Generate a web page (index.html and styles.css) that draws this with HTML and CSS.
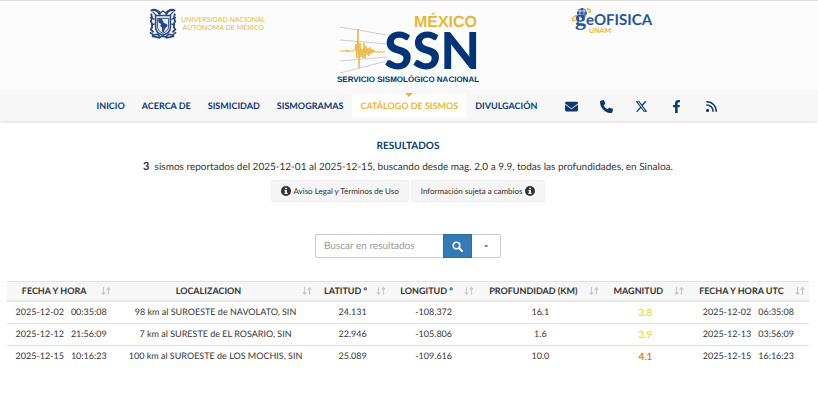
FILE: index.html
```html
<!DOCTYPE html>
<html lang="es">
<head>
  <meta charset="UTF-8">
  <meta name="viewport" content="width=device-width, initial-scale=1.0">
  <title>Servicio Sismológico Nacional | Catálogo de sismos</title>
  <link rel="stylesheet" href="styles.css">
</head>
<body>

  <!-- iconos -->
  <svg class="sprite" aria-hidden="true">
    <symbol id="sort" viewBox="0 0 10 10">
      <path d="M2.5 1v7M.8 6.3l1.7 2 1.7-2M7.5 9V2M5.8 3.7l1.7-2 1.7 2" fill="none" stroke="currentColor" stroke-width="1.2"/>
    </symbol>
    <symbol id="info" viewBox="0 0 10 10">
      <circle cx="5" cy="5" r="5" fill="currentColor"/>
      <path d="M4.2 1.8h1.7v1.4H4.2zM3.5 4.1h2.4v2.7h.7V8H3.4V6.8h.8V5.2h-.7z" fill="#fff"/>
    </symbol>
  </svg>

  <header class="header">
    <div class="logos">
      <a href="#" class="logo logo-unam">
        <svg width="28" height="32" viewBox="0 0 30 32" fill="none" stroke="#24477f" role="img" aria-label="Escudo UNAM">
          <path d="M2 2c3-2 6-1 8 1l2 3M28 2c-3-2-6-1-8 1l-2 3" stroke-width="2.4"/>
          <path d="M2 5c2 3 1 6 0 8 2 3 2 6 0 9l3 3M28 5c-2 3-1 6 0 8-2 3-2 6 0 9l-3 3" stroke-width="2"/>
          <path d="M10 2l2 2 3-2 3 2 2-2M4 3l4 4M26 3l-4 4M1 9l5 2M29 9l-5 2M2 17l4-1M28 17l-4-1" stroke-width="1.4"/>
          <path d="M7 7h16v12c0 5-4 8-8 9-4-1-8-4-8-9z" stroke-width="1.6" fill="#e9eef6"/>
          <path d="M9 10h12v9c0 3-3 6-6 7-3-1-6-4-6-7z" stroke-width="1"/>
          <path d="M10 10l4 1 1 2 1 2 3 1 1 2-3 3-1 4-2-1v-4l-2-2 1-2-3-2z" fill="#24477f" stroke="none"/>
          <path d="M1 25l4 3 4-1 3 3 3-1 3 1 3-3 4 1 4-3M3 29l5 1 4 1M27 29l-5 1-4 1" stroke-width="1.8"/>
        </svg>
        <span>UNIVERSIDAD NACIONAL<br>AUTÓNOMA DE MÉXICO</span>
      </a>
      <a href="#" class="logo">
        <svg width="140" height="76" viewBox="0 0 140 76" role="img" aria-label="SSN México">
          <path d="M1 19l47 8M1 32l47 4M1 53l47-4M1 65l47-12" stroke="#b9c3d1" stroke-width=".8" fill="none"/>
          <path d="M1 43h5l1-1 1 2 1-2 1 2 1-1h5l1-7 1 14 1-29 1 39 1-25 1 14 1-8 1 9 1-15 1 15 1-12 1 9 1-7 1 8 1-9 1 7 1-5 1 4 1-3 1 2h2l1-1 1 2 1-1h5" fill="none" stroke="#e8b63c"/>
          <text class="logo-mexico" x="138" y="19" text-anchor="end">MÉXICO</text>
          <text class="logo-ssn" x="141" y="61" text-anchor="end">SSN</text>
          <text class="logo-nombre" x="69" y="74" text-anchor="middle">SERVICIO SISMOLÓGICO NACIONAL</text>
        </svg>
      </a>
      <a href="#" class="logo">
        <svg width="76" height="28" viewBox="2 0 76 28" role="img" aria-label="Geofísica UNAM">
          <circle cx="11" cy="5" r="5" fill="#24539a"/>
          <path d="M6 3h10M6 7h10M9 0v10M13 0v10" stroke="#fcfcfc" stroke-width=".8"/>
          <path d="M2 12c-1-3 2-4 4-5M1 10l1 3 3-1M16 2c3-1 4 0 3 3M16 0l3 2-1 3" fill="none" stroke="#e8b63c" stroke-width="1.3"/>
          <text class="logo-geo" x="4" y="17"><tspan class="logo-g">g</tspan>eOFISICA</text>
          <text class="logo-sub" x="18" y="25">UNAM</text>
        </svg>
      </a>
    </div>
  </header>

  <nav class="nav">
    <a href="#">INICIO</a>
    <a href="#">ACERCA DE</a>
    <a href="#">SISMICIDAD</a>
    <a href="#">SISMOGRAMAS</a>
    <a href="#" class="active">CATÁLOGO DE SISMOS</a>
    <a href="#">DIVULGACIÓN</a>
    <div class="social">
      <a href="#" aria-label="Correo"><svg width="13" height="13" viewBox="0 0 512 512"><path d="M48 64a48 48 0 0 0-29 86l218 164c11 8 27 8 38 0l218-164a48 48 0 0 0-29-86zM0 176v208a64 64 0 0 0 64 64h384a64 64 0 0 0 64-64V176L294 339c-23 17-53 17-76 0z"/></svg></a>
      <a href="#" aria-label="Teléfono"><svg width="13" height="13" viewBox="0 0 512 512"><path d="M165 25c-8-19-28-29-48-23L29 26C12 31 0 46 0 64c0 247 201 448 448 448 18 0 33-12 38-29l24-88c5-20-5-40-24-48l-96-40c-16-7-35-2-46 12l-41 49c-70-33-127-90-160-160l49-40c14-11 19-30 12-46z"/></svg></a>
      <a href="#" aria-label="X"><svg width="13" height="13" viewBox="0 0 512 512"><path d="M389 48h71L306 224l181 240H345L234 319 107 464H36l165-188L27 48h145l100 133zm-25 374h39L151 88h-42z"/></svg></a>
      <a href="#" aria-label="Facebook"><svg width="9" height="13" viewBox="0 0 320 512"><path d="M279 288l14-93h-89v-60c0-25 12-50 52-50h41V7s-37-7-72-7c-73 0-121 44-121 125v70H23v93h81v224h100V288z"/></svg></a>
      <a href="#" aria-label="RSS"><svg width="11" height="11" viewBox="0 0 448 448"><path d="M0 32C0 14 14 0 32 0c230 0 416 186 416 416a32 32 0 0 1-64 0C384 222 226 64 32 64 14 64 0 50 0 32zm0 352a64 64 0 1 1 128 0 64 64 0 1 1-128 0zm32-256c159 0 288 129 288 288a32 32 0 0 1-64 0c0-124-100-224-224-224a32 32 0 0 1 0-64z"/></svg></a>
    </div>
  </nav>

  <main class="contenido">
    <h1>RESULTADOS</h1>
    <p class="resumen"><strong>3</strong>&nbsp; sismos reportados del 2025-12-01 al 2025-12-15, buscando desde mag. 2.0 a 9.9, todas las profundidades, en Sinaloa.</p>

    <div class="avisos">
      <button type="button"><svg width="10" height="10"><use href="#info"/></svg>Aviso Legal y Términos de Uso</button>
      <button type="button">Información sujeta a cambios<svg width="10" height="10"><use href="#info"/></svg></button>
    </div>

    <form class="buscador">
      <input type="text" placeholder="Buscar en resultados" aria-label="Buscar en resultados">
      <button type="button" class="btn-buscar" aria-label="Buscar">
        <svg width="11" height="11" viewBox="0 0 11 11" fill="none" stroke="#fff"><circle cx="4.5" cy="4.5" r="3.3" stroke-width="1.6"/><path d="M7 7l3 3" stroke-width="2" stroke-linecap="round"/></svg>
      </button>
      <button type="button" class="btn-limpiar">-</button>
    </form>

    <table class="tabla">
      <colgroup>
        <col class="c-fecha"><col class="c-lugar"><col class="c-lat"><col class="c-lon"><col class="c-prof"><col class="c-mag"><col class="c-utc">
      </colgroup>
      <thead>
        <tr>
          <th><div><span>FECHA Y HORA</span><svg><use href="#sort"/></svg></div></th>
          <th><div><span>LOCALIZACION</span><svg><use href="#sort"/></svg></div></th>
          <th><div><span>LATITUD º</span><svg><use href="#sort"/></svg></div></th>
          <th><div><span>LONGITUD º</span><svg><use href="#sort"/></svg></div></th>
          <th><div><span>PROFUNDIDAD (KM)</span><svg><use href="#sort"/></svg></div></th>
          <th><div><span>MAGNITUD</span><svg><use href="#sort"/></svg></div></th>
          <th><div><span>FECHA Y HORA UTC</span><svg><use href="#sort"/></svg></div></th>
        </tr>
      </thead>
      <tbody>
        <tr>
          <td>2025-12-02 &nbsp; 00:35:08</td>
          <td>98 km al SUROESTE de NAVOLATO, SIN</td>
          <td>24.131</td>
          <td>-108.372</td>
          <td>16.1</td>
          <td class="mag mag-3">3.8</td>
          <td>2025-12-02 &nbsp; 06:35:08</td>
        </tr>
        <tr>
          <td>2025-12-12 &nbsp; 21:56:09</td>
          <td>7 km al SURESTE de EL ROSARIO, SIN</td>
          <td>22.946</td>
          <td>-105.806</td>
          <td>1.6</td>
          <td class="mag mag-3">3.9</td>
          <td>2025-12-13 &nbsp; 03:56:09</td>
        </tr>
        <tr>
          <td>2025-12-15 &nbsp; 10:16:23</td>
          <td>100 km al SUROESTE de LOS MOCHIS, SIN</td>
          <td>25.089</td>
          <td>-109.616</td>
          <td>10.0</td>
          <td class="mag mag-4">4.1</td>
          <td>2025-12-15 &nbsp; 16:16:23</td>
        </tr>
      </tbody>
    </table>
  </main>

</body>
</html>
```
FILE: styles.css
```css
* {
  box-sizing: border-box;
}

body {
  margin: 0;
  font-family: Lato, sans-serif;
  font-size: 10px;
  color: #333;
  background: #fff;
  text-rendering: geometricPrecision;
}

a {
  color: #0b3a72;
  text-decoration: none;
}

button,
input {
  font-family: inherit;
  font-size: 10px;
  text-rendering: inherit;
}

.sprite {
  display: none;
}

/* encabezado */
.header {
  border-top: 1px solid #ddd;
  background: #fcfcfc;
  padding: 7px 0;
}

.logos {
  display: grid;
  grid-template-columns: repeat(3, 1fr);
  justify-items: center;
  align-items: start;
  width: 74%;
  margin: 0 auto;
}

.logo {
  display: flex;
}

.logo svg {
  overflow: visible;
}

.logo-unam {
  gap: 4px;
  align-items: center;
  font-size: 7px;
  line-height: 8px;
  color: #e8b63c;
  text-align: center;
  white-space: nowrap;
}

.logo-mexico {
  font: 700 16px "Liberation Sans", sans-serif;
  fill: #e8b63c;
}

.logo-ssn {
  font: 900 51px Lato, sans-serif;
  fill: #003478;
}

.logo-nombre {
  font: 700 8px "Liberation Sans", sans-serif;
  fill: #003478;
}

.logo-geo {
  font: 700 15px Lato, sans-serif;
  fill: #24539a;
}

.logo-g {
  font: 700 22px "Liberation Serif", serif;
}

.logo-sub {
  font: 700 7px Lato, sans-serif;
  fill: #e8b63c;
}

/* menu */
.nav {
  display: flex;
  justify-content: center;
  align-items: center;
  gap: 1px;
  padding: 3px 0;
  background: #f7f7f7;
  box-shadow: 0 1px 3px rgba(0,0,0,0.15);
  font-size: 9px;
  font-weight: 700;
}

.nav > a {
  padding: 0 8px;
  line-height: 24px;
}

.nav .active {
  position: relative;
  color: #e8b63c;
  background: #fff;
}

.nav .active::before {
  content: "";
  position: absolute;
  top: -1px;
  left: 50%;
  margin-left: -4px;
  border: 4px solid transparent;
  border-top-color: #e8b63c;
  border-bottom: 0;
}

.social {
  display: flex;
  margin-left: 8px;
}

.social a {
  display: flex;
  justify-content: center;
  align-items: center;
  width: 35px;
}

.social svg {
  fill: #0b3a72;
}

/* resultados */
.contenido {
  padding: 17px 9px 16px 7px;
  text-align: center;
}

h1 {
  margin: 0;
  font-size: 10px;
  line-height: 16px;
  color: #0b3a72;
}

.resumen {
  margin: 5px 0;
  line-height: 16px;
}

.resumen strong {
  font-size: 11px;
}

.avisos {
  display: flex;
  justify-content: center;
  gap: 2px;
}

.avisos button {
  display: flex;
  align-items: center;
  gap: 3px;
  height: 22px;
  padding: 0 9px;
  font-size: 8px;
  color: #333;
  background: #f5f5f5;
  border: 1px solid #eee;
  border-radius: 2px;
}

/* buscador */
.buscador {
  display: flex;
  justify-content: center;
  height: 24px;
  margin: 32px 0 23px;
}

.buscador input {
  width: 128px;
  padding: 0 8px;
  border: 1px solid #ccc;
  border-right: 0;
  border-radius: 3px 0 0 3px;
}

.buscador input::placeholder {
  color: #999;
}

.buscador button {
  display: flex;
  justify-content: center;
  align-items: center;
  width: 29px;
  padding: 0;
  border: 1px solid #ccc;
}

.buscador .btn-buscar {
  background: #337ab7;
  border-color: #2e6da4;
}

.buscador .btn-limpiar {
  background: #fff;
  border-left: 0;
  border-radius: 0 3px 3px 0;
  font-weight: 700;
}

/* tabla */
.tabla {
  width: 100%;
  table-layout: fixed;
  border-collapse: separate;
  border-spacing: 0;
  font-size: 9px;
  line-height: 11px;
}

.c-fecha { width: 13.5%; }
.c-lugar { width: 25%; }
.c-lat { width: 9.2%; }
.c-lon { width: 11%; }
.c-prof { width: 15.6%; }
.c-mag { width: 10.6%; }
.c-utc { width: 15.1%; }

.tabla th {
  padding: 3px 4px 4px 0;
  background: #f7f7f7;
  border-top: 1px solid #e2e2e2;
  border-bottom: 2px solid #e6e6e6;
}

.tabla th div {
  display: flex;
  align-items: center;
}

.tabla th span {
  flex: 1;
  white-space: nowrap;
}

.tabla th svg {
  width: 10px;
  height: 10px;
  color: #c8c8c8;
}

.tabla td {
  padding: 4px 0 6px;
  white-space: nowrap;
}

.tabla tr + tr td {
  border-top: 1px solid #ddd;
}

.tabla .mag {
  padding: 6px 0 4px;
  font-size: 10px;
  font-weight: 700;
}

.mag-3 {
  color: #fbd83a;
}

.mag-4 {
  color: #f07c1e;
}
```
